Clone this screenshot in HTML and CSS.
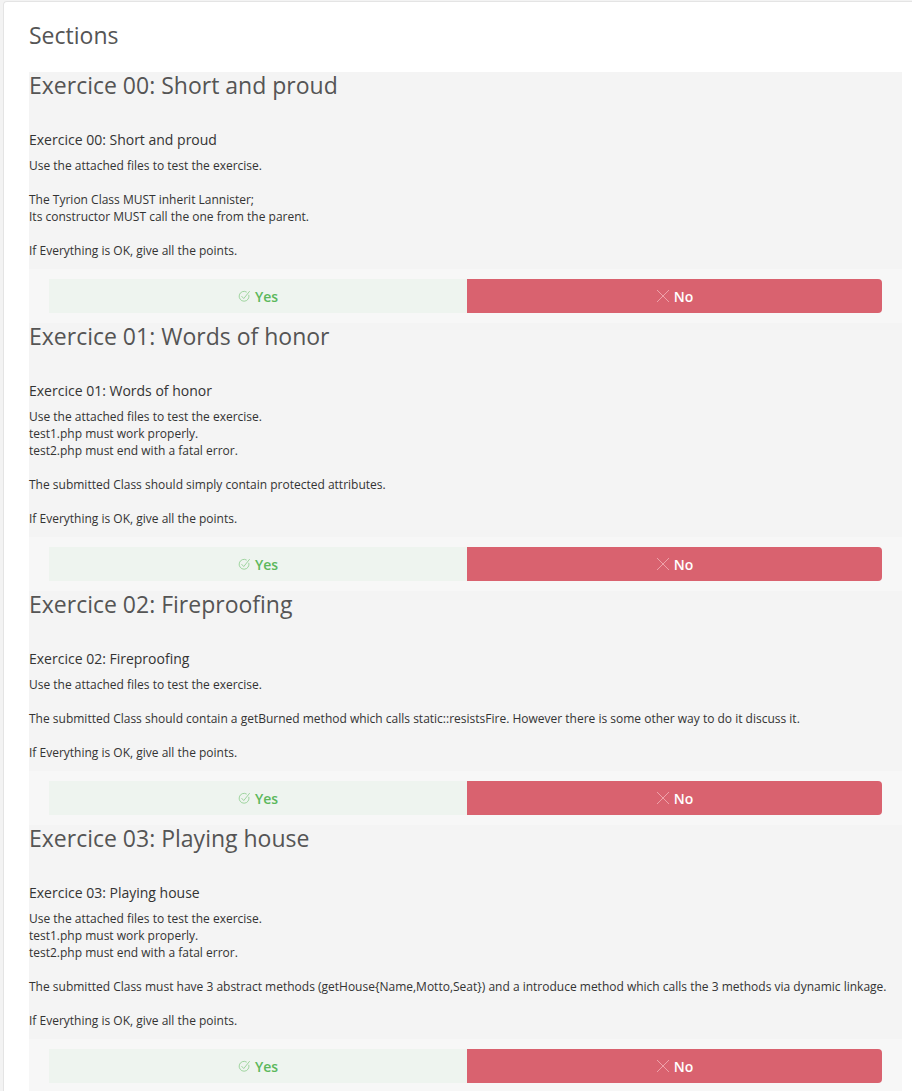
FILE: index.html
```html
<!DOCTYPE html>
<html>
<head>
<meta charset="utf-8">
<link rel="stylesheet" href="styles.css">
</head>
<body>
<div class="card">
  <h1 class="title">Sections</h1>

  <div class="section">
    <div class="section-body">
      <h2 class="sec-title">Exercice 00: Short and proud</h2>
      <h3 class="sub-title">Exercice 00: Short and proud</h3>
      <div class="desc">Use the attached files to test the exercise.<br><br>The Tyrion Class MUST inherit Lannister;<br>Its constructor MUST call the one from the parent.<br><br>If Everything is OK, give all the points.</div>
    </div>
    <div class="actions">
      <div class="btn btn-yes"><svg class="ico" viewBox="0 0 14 14"><path d="M11.6 5.2A5.3 5.3 0 1 1 9.4 2.3" /><path d="M3.8 6.6L6.2 9.2L12.6 1.2" /></svg><span>Yes</span></div>
      <div class="btn btn-no"><svg class="ico" viewBox="0 0 14 14"><path d="M1 1L13 13M13 1L1 13" /></svg><span>No</span></div>
    </div>
  </div>

  <div class="section">
    <div class="section-body">
      <h2 class="sec-title">Exercice 01: Words of honor</h2>
      <h3 class="sub-title">Exercice 01: Words of honor</h3>
      <div class="desc">Use the attached files to test the exercise.<br>test1.php must work properly.<br>test2.php must end with a fatal error.<br><br>The submitted Class should simply contain protected attributes.<br><br>If Everything is OK, give all the points.</div>
    </div>
    <div class="actions">
      <div class="btn btn-yes"><svg class="ico" viewBox="0 0 14 14"><path d="M11.6 5.2A5.3 5.3 0 1 1 9.4 2.3" /><path d="M3.8 6.6L6.2 9.2L12.6 1.2" /></svg><span>Yes</span></div>
      <div class="btn btn-no"><svg class="ico" viewBox="0 0 14 14"><path d="M1 1L13 13M13 1L1 13" /></svg><span>No</span></div>
    </div>
  </div>

  <div class="section">
    <div class="section-body">
      <h2 class="sec-title">Exercice 02: Fireproofing</h2>
      <h3 class="sub-title">Exercice 02: Fireproofing</h3>
      <div class="desc">Use the attached files to test the exercise.<br><br>The submitted Class should contain a getBurned method which calls static::resistsFire. However there is some other way to do it discuss it.<br><br>If Everything is OK, give all the points.</div>
    </div>
    <div class="actions">
      <div class="btn btn-yes"><svg class="ico" viewBox="0 0 14 14"><path d="M11.6 5.2A5.3 5.3 0 1 1 9.4 2.3" /><path d="M3.8 6.6L6.2 9.2L12.6 1.2" /></svg><span>Yes</span></div>
      <div class="btn btn-no"><svg class="ico" viewBox="0 0 14 14"><path d="M1 1L13 13M13 1L1 13" /></svg><span>No</span></div>
    </div>
  </div>

  <div class="section">
    <div class="section-body">
      <h2 class="sec-title">Exercice 03: Playing house</h2>
      <h3 class="sub-title">Exercice 03: Playing house</h3>
      <div class="desc">Use the attached files to test the exercise.<br>test1.php must work properly.<br>test2.php must end with a fatal error.<br><br>The submitted Class must have 3 abstract methods (getHouse{Name,Motto,Seat}) and a introduce method which calls the 3 methods via dynamic linkage.<br><br>If Everything is OK, give all the points.</div>
    </div>
    <div class="actions">
      <div class="btn btn-yes"><svg class="ico" viewBox="0 0 14 14"><path d="M11.6 5.2A5.3 5.3 0 1 1 9.4 2.3" /><path d="M3.8 6.6L6.2 9.2L12.6 1.2" /></svg><span>Yes</span></div>
      <div class="btn btn-no"><svg class="ico" viewBox="0 0 14 14"><path d="M1 1L13 13M13 1L1 13" /></svg><span>No</span></div>
    </div>
  </div>
</div>
</body>
</html>
```

FILE: styles.css
```css
html, body {
  margin: 0;
  padding: 0;
}
body {
  background: #f3f3f3;
  font-family: "Open Sans", "Noto Sans", sans-serif;
  color: #333;
  overflow: hidden;
}
.card {
  margin: 1px 0 0 3px;
  background: #fff;
  border: 1px solid #e4e4e4;
  border-right: none;
  border-radius: 4px 0 0 0;
  padding: 0 10px 0 25px;
  min-height: 1200px;
}
.title {
  margin: 0;
  padding: 20px 0 24px;
  font-size: 23px;
  font-weight: 400;
  line-height: 26px;
  color: #555;
}
.section {
  background: #f4f4f4;
}
.section-body {
  padding: 0 0 10px;
}
.sec-title {
  margin: 0;
  font-size: 23px;
  font-weight: 400;
  line-height: 26px;
  color: #555;
}
.sub-title {
  margin: 32px 0 7px;
  font-size: 14px;
  font-weight: 400;
  line-height: 20px;
  color: #333;
}
.desc {
  font-size: 12px;
  line-height: 17px;
  color: #333;
}
.actions {
  background: #f7f7f7;
  padding: 10px 20px 10px;
  display: flex;
}
.btn {
  flex: 1;
  height: 34px;
  display: flex;
  align-items: center;
  justify-content: center;
  font-size: 14px;
  font-weight: 600;
  gap: 4px;
}
.btn-yes {
  background: #eef4ef;
  color: #5cb85c;
  flex: 0 0 418px;
}
.btn-no {
  background: #d9626f;
  color: #fff;
  border-radius: 0 4px 4px 0;
}
.ico {
  width: 13px;
  height: 13px;
  fill: none;
  stroke-width: 0.9;
}
.btn-yes .ico {
  stroke: #8fce8f;
}
.btn-no .ico {
  stroke: #f1a9b0;
  width: 14px;
  height: 14px;
}
```
